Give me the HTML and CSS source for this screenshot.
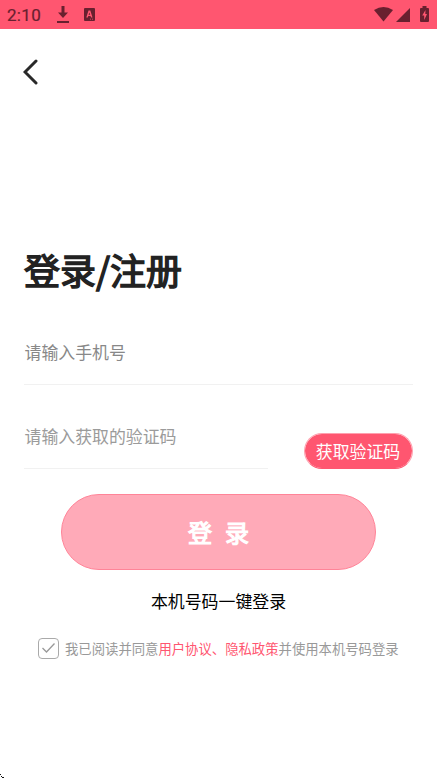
FILE: index.html
```html
<!DOCTYPE html>
<html lang="zh-CN">
<head>
<meta charset="utf-8">
<title>登录/注册</title>
<link rel="stylesheet" href="styles.css">
</head>
<body>
<div class="screen">
  <header class="status">
    <span class="clock">2:10</span>
    <svg class="download" width="12" height="18" viewBox="0 0 12 18"><path d="M4.500 0h3v6.500H11L6 12 1 6.500h3.500zM0 15h12v2H0z"/></svg>
    <svg class="keyboard" width="11" height="13" viewBox="0 0 11 13"><path fill-rule="evenodd" d="M1 0h9q1 0 1 1v11q0 1-1 1H1q-1 0-1-1V1q0-1 1-1zM4.500 2.500L2.300 9.500h1.500l.5-1.500h2.200l.5 1.500h1.500L6.300 2.500zM5.400 4.500L6.200 6.800H4.600zM6 10.700v.8h1v-.8zM8 10.700v.8h1v-.8z"/></svg>
    <span class="spacer"></span>
    <svg class="wifi" width="19" height="15" viewBox="0 0 19 15"><path d="M0 3Q9.500-3 19 3L9.500 14.500z"/></svg>
    <svg class="signal" width="14" height="14" viewBox="0 0 14 14"><path d="M14 0v14H0z"/></svg>
    <svg class="battery" width="9" height="16" viewBox="0 0 9 16"><path fill-rule="evenodd" d="M2.500 0h4v2H8q1 0 1 1v12q0 1-1 1H1q-1 0-1-1V3q0-1 1-1h1.500zM5.500 4L2.200 9.500h2V14L7 8H5.300z"/></svg>
  </header>
  <main class="content">
    <svg class="back" width="16" height="26" viewBox="0 0 16 26"><path d="M13 2L2 13l11 11"/></svg>
    <h1 class="title">登录/注册</h1>
    <div class="field phone">请输入手机号</div>
    <div class="code-row">
      <div class="field code">请输入获取的验证码</div>
      <button class="get-code">获取验证码</button>
    </div>
    <button class="login"><span>登</span><span>录</span></button>
    <div class="one-tap">本机号码一键登录</div>
    <div class="agreement">
      <svg class="check" width="21" height="21" viewBox="0 0 21 21"><rect x=".5" y=".5" width="20" height="20" rx="3.500"/><path class="tick" d="M4.500 10l4 4 8-8.500"/></svg>
      <span class="terms">我已阅读并同意<b>用户协议、隐私政策</b>并使用本机号码登录</span>
    </div>
  </main>
  <svg class="corner" width="4" height="4" viewBox="0 0 4 4"><path d="M0 0h1v1H0zM1 2h1v1H1zM2 3h2v1H2z"/></svg>
</div>
</body>
</html>
```
FILE: styles.css
```css
* { box-sizing: border-box; }
body { margin: 0; }
.screen {
  position: relative;
  width: 437px;
  height: 778px;
  overflow: hidden;
  background: #fff;
  font-family: "Noto Sans CJK SC", sans-serif;
}
svg { display: block; flex: none; }
.status {
  display: flex;
  align-items: flex-start;
  height: 29px;
  padding: 0 8px 0 7px;
  background: #ff5670;
  color: #69202f;
  fill: #69202f;
}
.clock {
  width: 50px;
  font: 400 17px/30px Roboto, sans-serif;
  letter-spacing: .3px;
  -webkit-text-stroke: .2px #69202f;
}
.download { margin-top: 6px; }
.keyboard { margin: 8px 0 0 15px; }
.spacer { flex: 1; }
.wifi { margin-top: 7px; }
.signal { margin: 8px 0 0 3px; }
.battery { margin: 6px 0 0 10px; }
.content { padding: 30px 24px 0; }
.back {
  margin-left: -1px;
  fill: none;
  stroke: #292929;
  stroke-width: 3;
  stroke-linecap: round;
}
.title {
  margin: 157px 0 0;
  font-size: 36px;
  line-height: 54px;
  font-weight: 400;
  -webkit-text-stroke: 1.400px #222;
  color: #222;
}
.field {
  height: 65px;
  padding-left: .5px;
  border-bottom: 1px solid #f1f1f1;
  font-size: 16.900px;
  line-height: 63px;
  color: #888;
}
.phone { margin-top: 24px; }
.code-row {
  display: flex;
  justify-content: space-between;
  align-items: flex-end;
  margin-top: 19px;
}
.code { width: 244px; color: #9b9b9b; }
button { padding: 0; font-family: inherit; color: #fff; }
.get-code {
  width: 109px;
  height: 36px;
  border: 1px solid #ffa0ae;
  border-bottom-color: #ff5670;
  border-radius: 18px;
  background: #ff5670;
  background-clip: padding-box;
  font-size: 16.900px;
  line-height: 34px;
  text-indent: -1px;
}
.login {
  display: flex;
  justify-content: center;
  gap: 13px;
  width: 315px;
  height: 76px;
  margin: 25px 0 0 37px;
  border: 1px solid #ff8498;
  border-radius: 38px;
  background: #ffaab8;
  font-size: 24px;
  line-height: 74px;
  font-weight: 400;
  -webkit-text-stroke: 1.200px #fff;
}
.one-tap {
  margin-top: 18px;
  text-align: center;
  font-size: 16.900px;
  line-height: 26px;
  color: #000;
}
.agreement {
  display: flex;
  align-items: center;
  gap: 6px;
  margin: 22px 0 0 14px;
  font-size: 13.350px;
  line-height: 22px;
  white-space: nowrap;
  color: #999;
}
.terms { padding-top: 2px; }
.agreement b { font-weight: 400; color: #ff5670; }
.check { fill: none; stroke: #aaa; }
.tick { stroke: #999; stroke-width: 1.300; }
.corner { position: absolute; left: 0; bottom: 0; fill: #111; }
```
